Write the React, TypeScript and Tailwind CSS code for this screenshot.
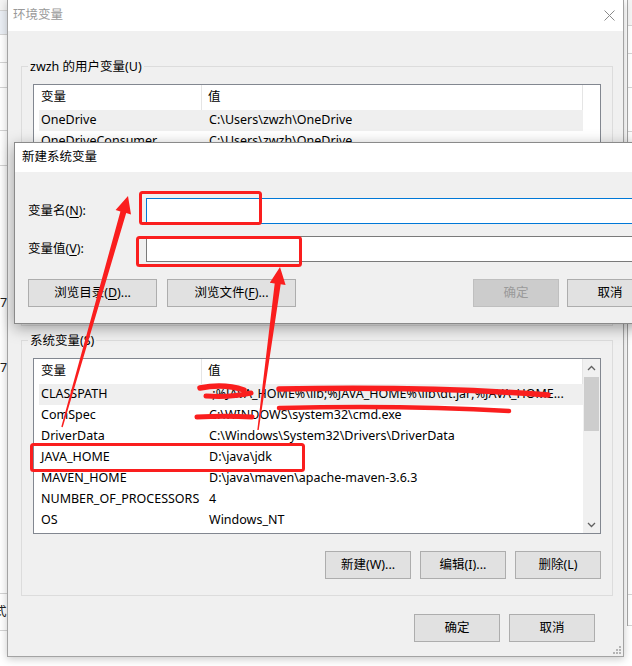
import React from "react";

type Row = [string, string];

const userRows: Row[] = [
  ["OneDrive", "C:\\Users\\zwzh\\OneDrive"],
  ["OneDriveConsumer", "C:\\Users\\zwzh\\OneDrive"],
  ["Path", "C:\\Users\\zwzh\\AppData\\Local\\Microsoft\\WindowsApps;"],
  ["TEMP", "C:\\Users\\zwzh\\AppData\\Local\\Temp"],
  ["TMP", "C:\\Users\\zwzh\\AppData\\Local\\Temp"],
];

const sysRows: Row[] = [
  ["CLASSPATH", ".;%JAVA_HOME%\\lib;%JAVA_HOME%\\lib\\dt.jar;%JAVA_HOME..."],
  ["ComSpec", "C:\\WINDOWS\\system32\\cmd.exe"],
  ["DriverData", "C:\\Windows\\System32\\Drivers\\DriverData"],
  ["JAVA_HOME", "D:\\java\\jdk"],
  ["MAVEN_HOME", "D:\\java\\maven\\apache-maven-3.6.3"],
  ["NUMBER_OF_PROCESSORS", "4"],
  ["OS", "Windows_NT"],
];

function Btn({ children, className = "", disabled = false }: { children: React.ReactNode; className?: string; disabled?: boolean }) {
  return (
    <div
      className={`flex h-[28px] shrink-0 items-center justify-center border ${
        disabled ? "border-[#bfbfbf] bg-[#cccccc] text-[#9a9a9a]" : "border-[#adadad] bg-[#e1e1e1] text-black"
      } ${className}`}
    >
      {children}
    </div>
  );
}

function ScrollBar() {
  return (
    <div className="flex w-[17px] shrink-0 flex-col bg-[#f0f0f0]">
      <div className="flex h-[17px] items-center justify-center">
        <svg width="9" height="6" viewBox="0 0 9 6">
          <path d="M1 5 L4.5 1.5 L8 5" stroke="#606060" strokeWidth="1.3" fill="none" />
        </svg>
      </div>
      <div className="mx-[1px] mt-[1px] h-[54px] bg-[#cdcdcd]" />
      <div className="flex-1" />
      <div className="flex h-[17px] items-center justify-center">
        <svg width="9" height="6" viewBox="0 0 9 6">
          <path d="M1 1 L4.5 4.5 L8 1" stroke="#606060" strokeWidth="1.3" fill="none" />
        </svg>
      </div>
    </div>
  );
}

function ListView({ rows, scroll = false }: { rows: Row[]; scroll?: boolean }) {
  return (
    <div className="flex h-[176px] w-full min-w-0 border border-[#828790] bg-white">
      <div className="flex min-w-0 flex-1 flex-col overflow-hidden">
        <div className="flex h-[25px] shrink-0">
          <div className="flex w-[168px] items-center border-r border-[#e5e5e5] pl-[7px]">变量</div>
          <div className="flex flex-1 items-center border-r border-[#e5e5e5] pl-[6px]">值</div>
        </div>
        {rows.map(([k, v], i) => (
          <div key={k} className={`ml-[5px] flex h-[21px] min-w-0 shrink-0 items-center ${i === 0 ? "bg-[#efefef]" : ""}`}>
            <div className="w-[163px] shrink-0 overflow-hidden whitespace-nowrap pl-[2px]">{k}</div>
            <div className="min-w-0 flex-1 overflow-hidden text-ellipsis whitespace-nowrap pl-[7px] pr-[4px]">{v}</div>
          </div>
        ))}
      </div>
      {scroll ? <ScrollBar /> : <div className="w-[17px] shrink-0" />}
    </div>
  );
}

function LeftStrip() {
  return (
    <div className="flex w-[7px] shrink-0 flex-col overflow-hidden bg-white text-[#222]">
      <div className="h-[10px] shrink-0 bg-[#f4f4f4]" />
      <div className="h-[24px] shrink-0 border-t border-[#d4d4d4] bg-[#eaeef4]" />
      <div className="h-[28px] shrink-0 border-t border-[#d4d4d4]" />
      <div className="h-[25px] shrink-0 border-t border-[#d4d4d4]" />
      <div className="h-[43px] shrink-0 border-t border-[#d4d4d4]" />
      <div className="h-[35px] shrink-0 border-t border-[#d4d4d4]" />
      <div className="h-[128px] shrink-0 border-t border-[#d4d4d4]" />
      <div className="h-[20px] shrink-0 leading-[20px]">7</div>
      <div className="h-[45px] shrink-0" />
      <div className="h-[20px] shrink-0 leading-[20px]">7</div>
      <div className="h-[215px] shrink-0" />
      <div className="h-[37px] shrink-0 overflow-hidden border-t border-[#d4d4d4] pt-[8px] leading-[20px]">
        <span className="-ml-[6px] block whitespace-nowrap">式</span>
      </div>
      <div className="flex-1 border-t border-[#d4d4d4]" />
    </div>
  );
}

function RightStrip() {
  return (
    <div className="ml-[3px] flex h-[626px] flex-1 flex-col border-l border-[#a8a8a8] bg-white">
      <div className="h-[25px] shrink-0 bg-[#f4f4f4]" />
      <div className="h-[28px] shrink-0 border-t border-[#d4d4d4]" />
      <div className="h-[34px] shrink-0 border-t border-[#d4d4d4]" />
      <div className="h-[44px] shrink-0 border-t border-[#d4d4d4]" />
      <div className="h-[463px] shrink-0 border-t border-[#d4d4d4]" />
      <div className="flex-1 border-y border-[#d4d4d4]" />
    </div>
  );
}

function MainDialog() {
  return (
    <div className="relative flex h-[657px] w-[617px] shrink-0 flex-col border-x border-b border-[#a3a3a3] shadow-[0_2px_8px_rgba(0,0,0,0.22)]">
      <div className="flex h-[31px] shrink-0 items-center justify-between bg-white pl-[5px] pr-[8px] text-[#999999]">
        <span>环境变量</span>
        <svg width="11" height="11" viewBox="0 0 11 11">
          <path d="M0.5 0.5 L10.5 10.5 M10.5 0.5 L0.5 10.5" stroke="#8a8a8a" strokeWidth="1" />
        </svg>
      </div>
      <div className="flex min-w-0 flex-1 flex-col bg-[#f0f0f0] pl-[13px] pt-[27px]">
        <fieldset className="h-[268px] w-[592px] min-w-0 shrink-0 border border-[#dcdcdc] px-[11px]">
          <legend className="-ml-[5px] px-[2px] leading-[17px]">zwzh 的用户变量(U)</legend>
          <div className="mt-[9px] min-w-0">
            <ListView rows={userRows} />
          </div>
          <div className="mt-[17px] flex justify-end gap-[9px]">
            <Btn className="w-[86px]">新建(N)...</Btn>
            <Btn className="w-[86px]">编辑(E)...</Btn>
            <Btn className="w-[86px]">删除(D)</Btn>
          </div>
        </fieldset>
        <fieldset className="mt-[6px] w-[592px] min-w-0 shrink-0 border border-[#dcdcdc] px-[11px] pb-[16px]">
          <legend className="-ml-[5px] px-[2px] leading-[17px]">系统变量(S)</legend>
          <div className="mt-[9px] min-w-0">
            <ListView rows={sysRows} scroll />
          </div>
          <div className="mt-[17px] flex justify-end gap-[9px]">
            <Btn className="w-[86px]">新建(W)...</Btn>
            <Btn className="w-[86px]">编辑(I)...</Btn>
            <Btn className="w-[86px]">删除(L)</Btn>
          </div>
        </fieldset>
        <div className="mt-[18px] flex justify-end gap-[9px] pr-[28px]">
          <Btn className="w-[86px]">确定</Btn>
          <Btn className="w-[86px]">取消</Btn>
        </div>
      </div>
      <svg className="absolute bottom-[1px] right-[1px]" width="10" height="10" viewBox="0 0 10 10">
        <g fill="#b4b4b4">
          <rect x="7" y="1" width="2" height="2" />
          <rect x="4" y="4" width="2" height="2" />
          <rect x="7" y="4" width="2" height="2" />
          <rect x="1" y="7" width="2" height="2" />
          <rect x="4" y="7" width="2" height="2" />
          <rect x="7" y="7" width="2" height="2" />
        </g>
      </svg>
    </div>
  );
}

function NewVarDialog() {
  return (
    <div className="absolute left-[14px] top-[142px] flex h-[182px] w-[650px] flex-col border border-[#8a8a8a] bg-[#f0f0f0] shadow-[0_4px_14px_rgba(0,0,0,0.35)]">
      <div className="flex h-[29px] shrink-0 items-center bg-white pl-[7px] text-black">新建系统变量</div>
      <div className="flex flex-col pl-[13px] pt-[26px]">
        <div className="flex h-[26px] items-center">
          <div className="w-[118px] shrink-0">
            变量名(<span className="underline underline-offset-2">N</span>):
          </div>
          <div className="h-[26px] w-[500px] border border-[#0078d7] bg-white" />
        </div>
        <div className="mt-[12px] flex h-[26px] items-center">
          <div className="w-[118px] shrink-0">
            变量值(<span className="underline underline-offset-2">V</span>):
          </div>
          <div className="h-[26px] w-[500px] border border-[#7a7a7a] bg-white" />
        </div>
        <div className="mt-[17px] flex">
          <Btn className="w-[129px]">
            浏览目录(<span className="underline underline-offset-2">D</span>)...
          </Btn>
          <Btn className="ml-[10px] w-[129px]">
            浏览文件(<span className="underline underline-offset-2">F</span>)...
          </Btn>
          <Btn className="ml-[177px] w-[86px]" disabled>
            确定
          </Btn>
          <Btn className="ml-[8px] w-[86px]">取消</Btn>
        </div>
      </div>
    </div>
  );
}

function Marks() {
  const red = "#fa1e1e";
  return (
    <svg className="pointer-events-none absolute left-0 top-0" width="632" height="666" viewBox="0 0 632 666">
      <g fill="none" stroke={red} strokeWidth="3">
        <rect x="140.5" y="192.5" width="120" height="31" rx="2" />
        <rect x="137.5" y="237.5" width="163" height="28" rx="2" />
        <rect x="31.5" y="444.5" width="272" height="26" rx="2" />
      </g>
      <g fill={red}>
        <polygon points="128,196 131,214.5 126.2,213.1 62.7,427.2 61.3,426.8 120.4,211.5 115.6,210.1" />
        <polygon points="280,267 285.6,284.9 280.7,284.2 258.7,430.1 257.3,429.9 274.7,283.4 269.8,282.8" />
      </g>
      <g fill="none" stroke={red} strokeLinecap="round">
        <path d="M200 388 C215 385 232 386 244 390" strokeWidth="5.5" />
        <path d="M206 396 C222 397 238 396 251 393" strokeWidth="5" />
        <path d="M279 389 C380 387 470 389 548 395" strokeWidth="5.5" />
        <path d="M197 417 C215 416 235 416 252 417" strokeWidth="5" />
        <path d="M279 408 C360 406 440 407 509 411" strokeWidth="4.5" />
      </g>
    </svg>
  );
}

export default function App() {
  return (
    <div className="relative flex h-[666px] w-[632px] overflow-hidden bg-white text-[12.5px] text-black [font-family:'Noto_Sans','Noto_Sans_CJK_SC',sans-serif]">
      <LeftStrip />
      <MainDialog />
      <RightStrip />
      <NewVarDialog />
      <Marks />
    </div>
  );
}
